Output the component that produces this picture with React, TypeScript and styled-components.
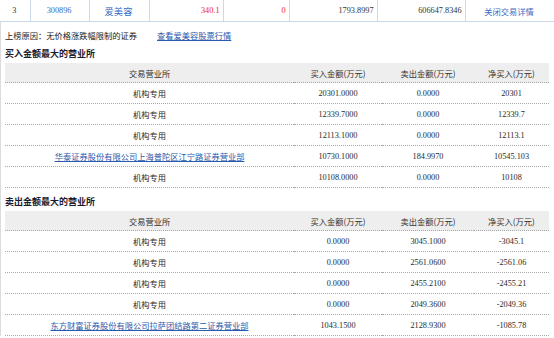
import React from "react";
import styled, { createGlobalStyle } from "styled-components";

const Global = createGlobalStyle`
  html, body { margin: 0; padding: 0; background: #fff; }
  body {
    font-family: "Liberation Serif", "Noto Sans CJK SC", serif;
    font-size: 8.25px;
    color: #2a2a2a;
    overflow: hidden;
  }
`;

const CJK = `"Noto Sans CJK SC", sans-serif`;

const Page = styled.div`
  width: 554px;
  height: 338px;
  overflow: hidden;
`;

const Col = styled.col<{ $w: number }>`
  width: ${(p) => p.$w}px;
`;

const SummaryTable = styled.table`
  width: 554px;
  border-collapse: collapse;
  table-layout: fixed;
`;

const SummaryCell = styled.td<{ $right?: boolean; $tone?: "red" | "link" | "plain"; $cjk?: boolean; $big?: boolean }>`
  height: 21px;
  padding: 0 3px 0 2px;
  border-bottom: 1px solid #c9d9e8;
  border-right: 1px solid #c9d9e8;
  text-align: ${(p) => (p.$right ? "right" : "center")};
  color: ${(p) => (p.$tone === "red" ? "#f01e1e" : p.$tone === "link" ? "#3d6bc2" : "#333")};
  font-family: ${(p) => (p.$cjk ? CJK : "inherit")};
  font-size: ${(p) => (p.$big ? "9.3px" : "inherit")};
  white-space: nowrap;
`;

const Body = styled.div`
  border-left: 1px solid #dcdcdc;
  padding: 3px 0 0 4px;
`;

const Reason = styled.div`
  display: flex;
  align-items: center;
  height: 19px;
  gap: 20px;
  font-family: ${CJK};
  color: #222;
`;

const Link = styled.a`
  color: #2a5aad;
  text-decoration: underline;
  cursor: pointer;
`;

const SectionTitle = styled.div<{ $gap?: number }>`
  height: 18px;
  line-height: 18px;
  margin-top: ${(p) => p.$gap || 0}px;
  font-family: ${CJK};
  font-weight: bold;
  font-size: 9px;
  color: #1c1c30;
`;

const DealTable = styled.table`
  width: 544px;
  border-collapse: separate;
  border-spacing: 0;
  table-layout: fixed;
`;

const HeadCell = styled.th`
  height: 19px;
  padding: 0;
  background: #eeeeee;
  border-bottom: 1px dotted #a8a8a8;
  font-family: ${CJK};
  font-weight: normal;
  color: #333;
  text-align: center;
`;

const Cell = styled.td<{ $cjk?: boolean }>`
  height: 20px;
  padding: 0;
  border-bottom: 1px dotted #a8a8a8;
  text-align: center;
  color: #2a2a2a;
  white-space: nowrap;
  font-family: ${(p) => (p.$cjk ? CJK : "inherit")};
`;

type Row = { name: string; link?: boolean; buy: string; sell: string; net: string };

const buyRows: Row[] = [
  { name: "机构专用", buy: "20301.0000", sell: "0.0000", net: "20301" },
  { name: "机构专用", buy: "12339.7000", sell: "0.0000", net: "12339.7" },
  { name: "机构专用", buy: "12113.1000", sell: "0.0000", net: "12113.1" },
  { name: "华泰证券股份有限公司上海普陀区江宁路证券营业部", link: true, buy: "10730.1000", sell: "184.9970", net: "10545.103" },
  { name: "机构专用", buy: "10108.0000", sell: "0.0000", net: "10108" },
];

const sellRows: Row[] = [
  { name: "机构专用", buy: "0.0000", sell: "3045.1000", net: "-3045.1" },
  { name: "机构专用", buy: "0.0000", sell: "2561.0600", net: "-2561.06" },
  { name: "机构专用", buy: "0.0000", sell: "2455.2100", net: "-2455.21" },
  { name: "机构专用", buy: "0.0000", sell: "2049.3600", net: "-2049.36" },
  { name: "东方财富证券股份有限公司拉萨团结路第二证券营业部", link: true, buy: "1043.1500", sell: "2128.9300", net: "-1085.78" },
];

const dealWidths = [289, 88, 92, 75];
const summaryWidths = [30, 59, 60, 74, 66, 88, 88, 89];

const Deals: React.FC<{ rows: Row[] }> = ({ rows }) => (
  <DealTable>
    <colgroup>
      {dealWidths.map((w, i) => (
        <Col key={i} $w={w} />
      ))}
    </colgroup>
    <thead>
      <tr>
        <HeadCell>交易营业所</HeadCell>
        <HeadCell>买入金额(万元)</HeadCell>
        <HeadCell>卖出金额(万元)</HeadCell>
        <HeadCell>净买入(万元)</HeadCell>
      </tr>
    </thead>
    <tbody>
      {rows.map((r, i) => (
        <tr key={i}>
          <Cell $cjk>{r.link ? <Link>{r.name}</Link> : r.name}</Cell>
          <Cell>{r.buy}</Cell>
          <Cell>{r.sell}</Cell>
          <Cell>{r.net}</Cell>
        </tr>
      ))}
    </tbody>
  </DealTable>
);

export default function App() {
  return (
    <Page>
      <Global />
      <SummaryTable>
        <colgroup>
          {summaryWidths.map((w, i) => (
            <Col key={i} $w={w} />
          ))}
        </colgroup>
        <tbody>
          <tr>
            <SummaryCell>3</SummaryCell>
            <SummaryCell $tone="link">300896</SummaryCell>
            <SummaryCell $tone="link" $cjk $big>爱美容</SummaryCell>
            <SummaryCell $right $tone="red">340.1</SummaryCell>
            <SummaryCell $right $tone="red">0</SummaryCell>
            <SummaryCell $right>1793.8997</SummaryCell>
            <SummaryCell $right>606647.8346</SummaryCell>
            <SummaryCell $tone="link" $cjk>关闭交易详情</SummaryCell>
          </tr>
        </tbody>
      </SummaryTable>
      <Body>
        <Reason>
          <span>上榜原因：无价格涨跌幅限制的证券</span>
          <Link>查看爱美容股票行情</Link>
        </Reason>
        <SectionTitle $gap={1}>买入金额最大的营业所</SectionTitle>
        <Deals rows={buyRows} />
        <SectionTitle $gap={5}>卖出金额最大的营业所</SectionTitle>
        <Deals rows={sellRows} />
      </Body>
    </Page>
  );
}
